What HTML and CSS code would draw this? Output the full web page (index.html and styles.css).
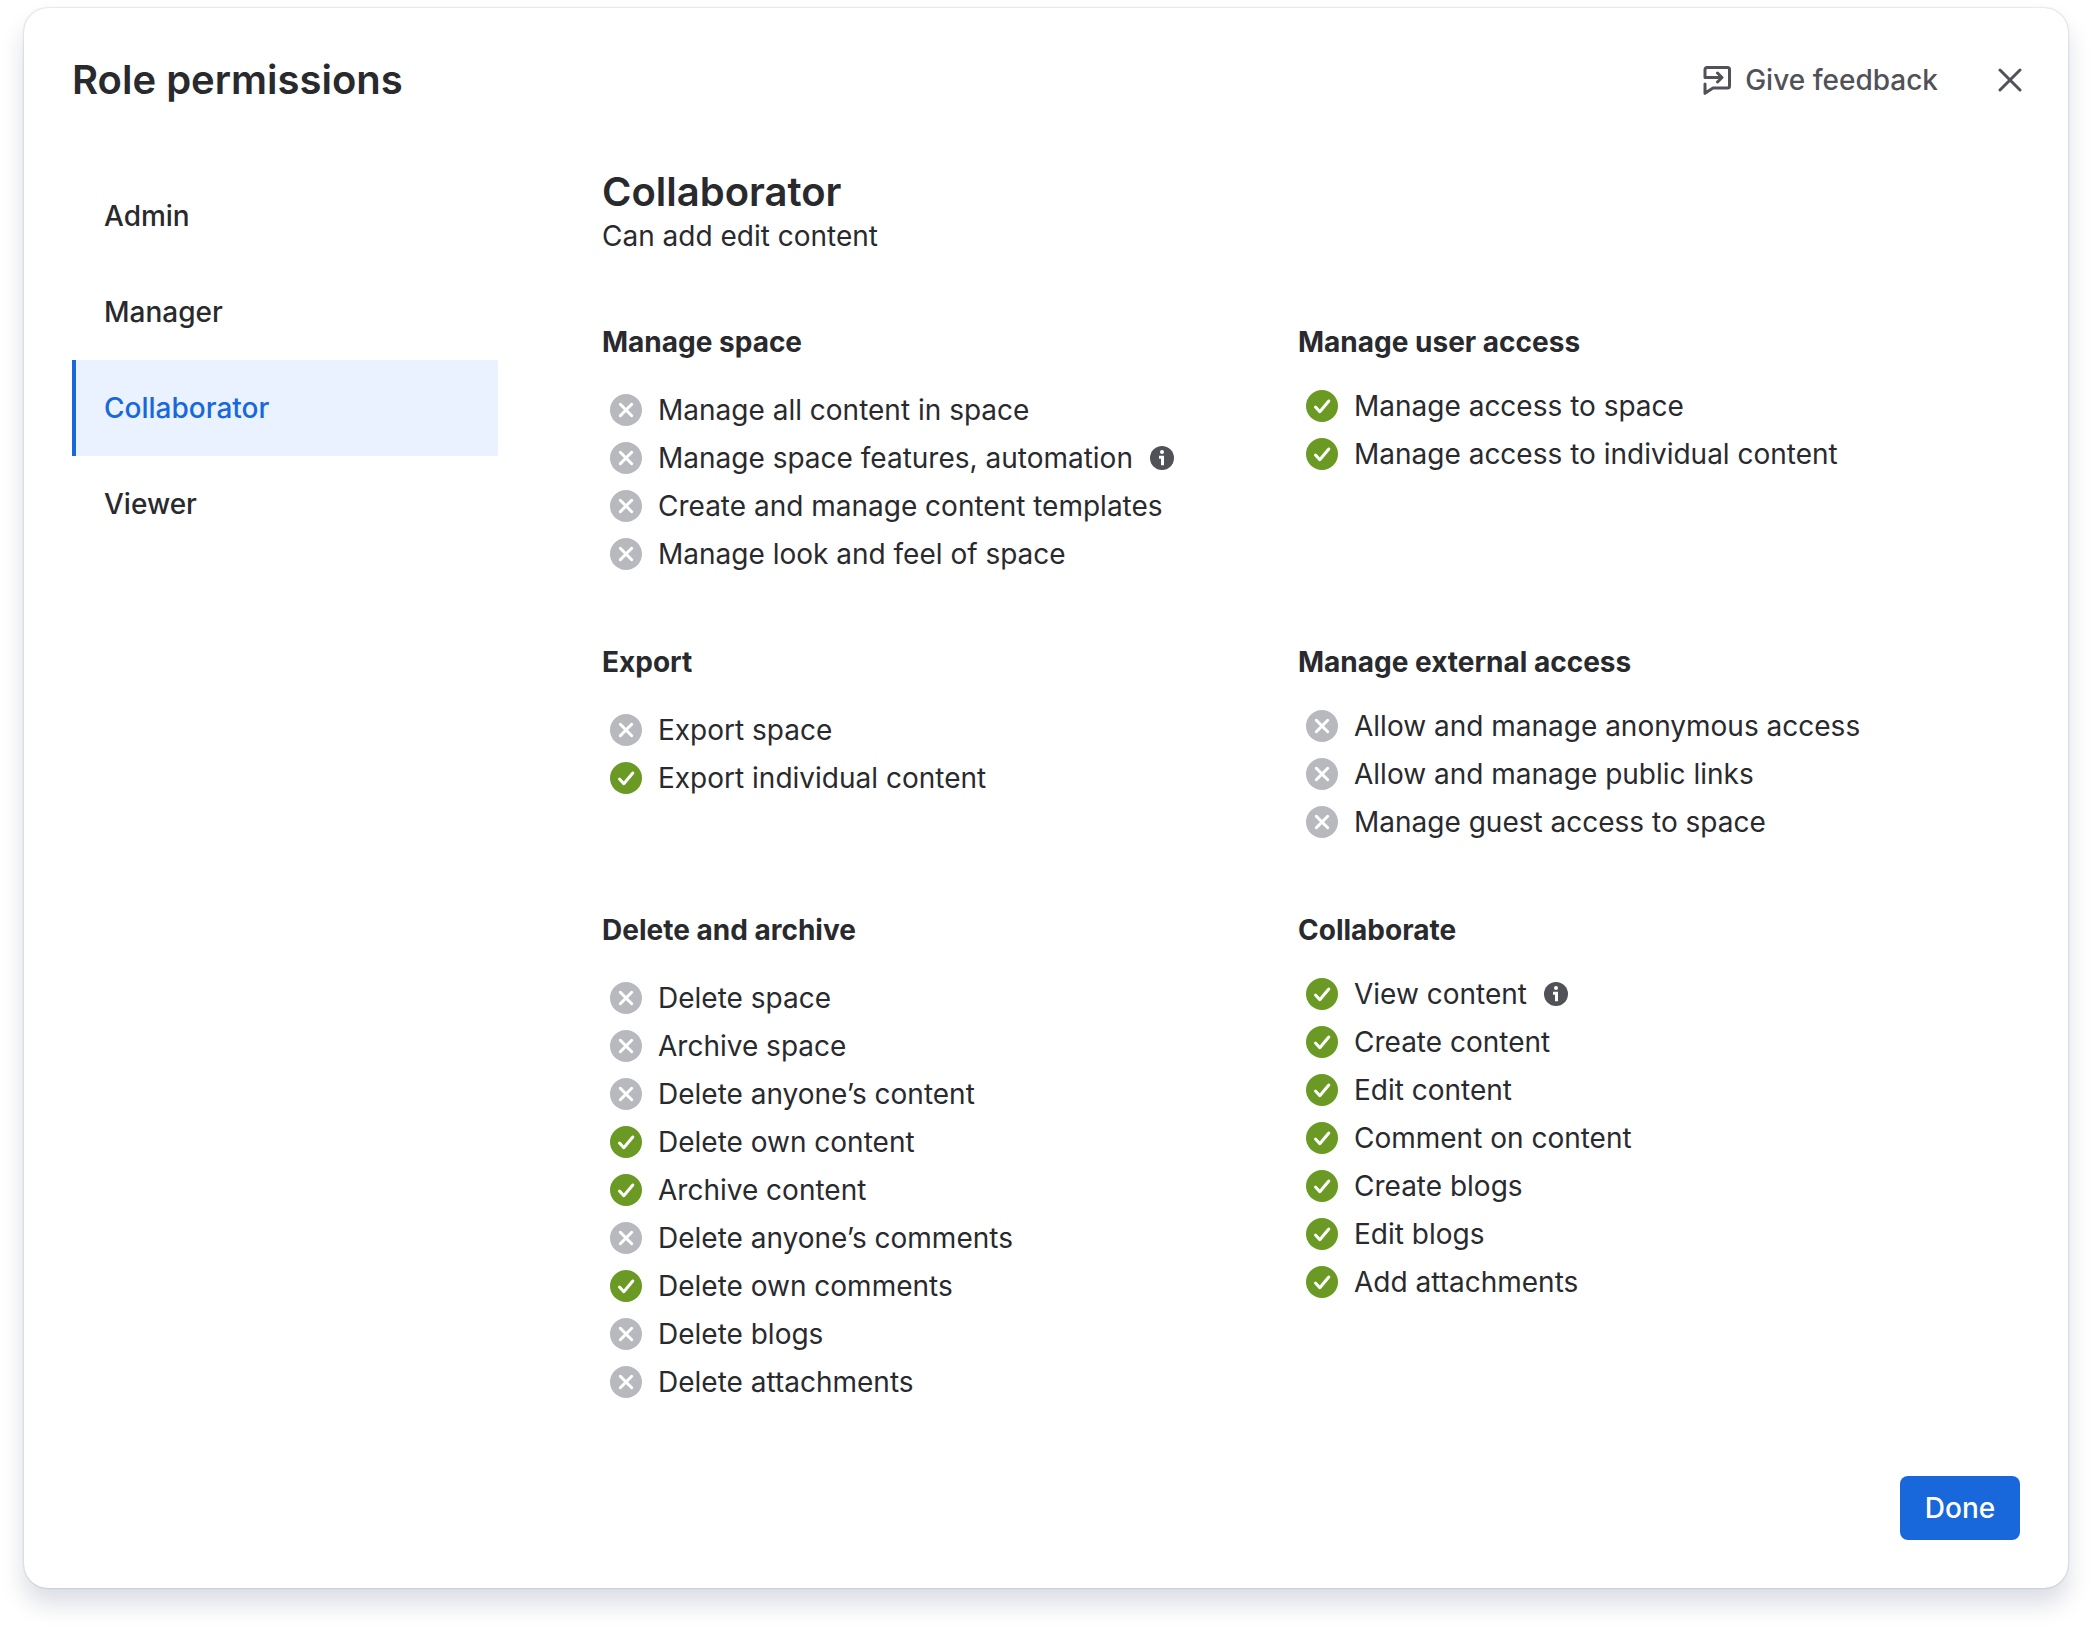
FILE: index.html
```html
<!DOCTYPE html>
<html lang="en">
<head>
    <meta charset="UTF-8">
    <meta name="viewport" content="width=device-width, initial-scale=1.0">
    <title>Role permissions</title>
    <link rel="stylesheet" href="styles.css">
</head>
<body>
    <!-- Shared icons -->
    <svg class="sprite" aria-hidden="true">
        <symbol id="icon-no" viewBox="0 0 32 32">
            <circle cx="16" cy="16" r="16" fill="#b7b9be"/>
            <path d="M10.300 10.300l11.400 11.400M21.700 10.300l-11.400 11.400" fill="none" stroke="#fff" stroke-width="3" stroke-linecap="round"/>
        </symbol>
        <symbol id="icon-yes" viewBox="0 0 32 32">
            <circle cx="16" cy="16" r="16" fill="#6a9a23"/>
            <path d="M9.500 17l4.300 4.700 9-10.700" fill="none" stroke="#fff" stroke-width="3" stroke-linecap="round" stroke-linejoin="round"/>
        </symbol>
        <symbol id="icon-info" viewBox="0 0 24 24">
            <circle cx="12" cy="12" r="12" fill="#505258"/>
            <circle cx="12" cy="6" r="2" fill="#fff"/>
            <path d="M9 11.200h3.500v8" fill="none" stroke="#fff" stroke-width="3"/>
        </symbol>
    </svg>

    <main class="modal" role="dialog" aria-labelledby="modal-title">
        <header class="modal-header">
            <h1 id="modal-title">Role permissions</h1>
            <div class="header-actions">
                <button type="button" class="feedback">
                    <svg width="28" height="30" viewBox="0 0 28 30" fill="none" stroke="currentColor" stroke-width="3" stroke-linecap="round" stroke-linejoin="round" aria-hidden="true">
                        <path d="M2 12.500V4.500a2 2 0 0 1 2-2h20.500a2 2 0 0 1 2 2V21a2 2 0 0 1-2 2H10L2 28.300V19M2 12.500H18M14.500 8l4.500 4.500-4.500 4.500"/>
                    </svg>
                    Give feedback
                </button>
                <button type="button" class="close" aria-label="Close">
                    <svg width="24" height="24" viewBox="0 0 24 24" fill="none" stroke="currentColor" stroke-width="3" stroke-linecap="round" aria-hidden="true">
                        <path d="M2 2l20 20M22 2L2 22"/>
                    </svg>
                </button>
            </div>
        </header>

        <div class="modal-body">
            <nav class="roles" aria-label="Roles">
                <a href="#admin">Admin</a>
                <a href="#manager">Manager</a>
                <a href="#collaborator" class="selected" aria-current="page">Collaborator</a>
                <a href="#viewer">Viewer</a>
            </nav>

            <div class="role">
                <h2>Collaborator</h2>
                <p>Can add edit content</p>

                <div class="groups">
                    <section class="group">
                        <h3>Manage space</h3>
                        <ul>
                            <li><svg class="status"><use href="#icon-no"/></svg>Manage all content in space</li>
                            <li><svg class="status"><use href="#icon-no"/></svg>Manage space features, automation <svg class="info"><use href="#icon-info"/></svg></li>
                            <li><svg class="status"><use href="#icon-no"/></svg>Create and manage content templates</li>
                            <li><svg class="status"><use href="#icon-no"/></svg>Manage look and feel of space</li>
                        </ul>
                    </section>

                    <section class="group">
                        <h3>Manage user access</h3>
                        <ul>
                            <li><svg class="status"><use href="#icon-yes"/></svg>Manage access to space</li>
                            <li><svg class="status"><use href="#icon-yes"/></svg>Manage access to individual content</li>
                        </ul>
                    </section>

                    <section class="group">
                        <h3>Export</h3>
                        <ul>
                            <li><svg class="status"><use href="#icon-no"/></svg>Export space</li>
                            <li><svg class="status"><use href="#icon-yes"/></svg>Export individual content</li>
                        </ul>
                    </section>

                    <section class="group">
                        <h3>Manage external access</h3>
                        <ul>
                            <li><svg class="status"><use href="#icon-no"/></svg>Allow and manage anonymous access</li>
                            <li><svg class="status"><use href="#icon-no"/></svg>Allow and manage public links</li>
                            <li><svg class="status"><use href="#icon-no"/></svg>Manage guest access to space</li>
                        </ul>
                    </section>

                    <section class="group">
                        <h3>Delete and archive</h3>
                        <ul>
                            <li><svg class="status"><use href="#icon-no"/></svg>Delete space</li>
                            <li><svg class="status"><use href="#icon-no"/></svg>Archive space</li>
                            <li><svg class="status"><use href="#icon-no"/></svg>Delete anyone’s content</li>
                            <li><svg class="status"><use href="#icon-yes"/></svg>Delete own content</li>
                            <li><svg class="status"><use href="#icon-yes"/></svg>Archive content</li>
                            <li><svg class="status"><use href="#icon-no"/></svg>Delete anyone’s comments</li>
                            <li><svg class="status"><use href="#icon-yes"/></svg>Delete own comments</li>
                            <li><svg class="status"><use href="#icon-no"/></svg>Delete blogs</li>
                            <li><svg class="status"><use href="#icon-no"/></svg>Delete attachments</li>
                        </ul>
                    </section>

                    <section class="group">
                        <h3>Collaborate</h3>
                        <ul>
                            <li><svg class="status"><use href="#icon-yes"/></svg>View content <svg class="info"><use href="#icon-info"/></svg></li>
                            <li><svg class="status"><use href="#icon-yes"/></svg>Create content</li>
                            <li><svg class="status"><use href="#icon-yes"/></svg>Edit content</li>
                            <li><svg class="status"><use href="#icon-yes"/></svg>Comment on content</li>
                            <li><svg class="status"><use href="#icon-yes"/></svg>Create blogs</li>
                            <li><svg class="status"><use href="#icon-yes"/></svg>Edit blogs</li>
                            <li><svg class="status"><use href="#icon-yes"/></svg>Add attachments</li>
                        </ul>
                    </section>
                </div>
            </div>
        </div>

        <footer class="modal-footer">
            <button type="button" class="done">Done</button>
        </footer>
    </main>
</body>
</html>
```
FILE: styles.css
```css
* {
    box-sizing: border-box;
}
body {
    margin: 0;
    padding: 8px 24px 40px;
    background: #fff;
    color: #292a2e;
    font-family: Inter, sans-serif;
    font-size: 28px;
    line-height: 40px;
}
h1, h2, h3, p, ul {
    margin: 0;
    padding: 0;
}
h1, h2 {
    font-size: 40px;
    line-height: 48px;
    font-weight: 600;
}
h3 {
    font-size: 28px;
    line-height: 40px;
    font-weight: 650;
}
ul {
    list-style: none;
}
button {
    font: inherit;
    border: none;
    cursor: pointer;
}
.sprite {
    display: none;
}
.modal {
    padding: 48px;
    background: #fff;
    border-radius: 24px;
    box-shadow: 0 16px 24px rgba(9, 30, 66, 0.15), 0 0 2px rgba(9, 30, 66, 0.31);
}

/* Header */
.modal-header {
    display: flex;
    justify-content: space-between;
    align-items: center;
    margin-bottom: 64px;
}
.header-actions {
    display: flex;
    align-items: center;
    gap: 60px;
    margin-right: -2px;
}
.feedback, .close {
    display: flex;
    align-items: center;
    padding: 0;
    background: none;
    color: #505258;
}
.feedback {
    gap: 14px;
    font-weight: 500;
}

/* Role list on the left */
.modal-body {
    display: flex;
    gap: 104px;
}
.roles {
    flex: 0 0 426px;
}
.roles a {
    display: block;
    padding: 28px;
    border-left: 4px solid transparent;
    color: #292a2e;
    font-weight: 500;
    text-decoration: none;
}
.roles .selected {
    border-left-color: #1868db;
    background: #e9f2fe;
    color: #1868db;
}

/* Permissions of the selected role */
.role {
    flex: 1;
    padding-right: 26px;
}
.groups {
    display: grid;
    grid-template-columns: 1fr 1fr;
    row-gap: 64px;
    margin-top: 66px;
}
.group ul {
    padding-left: 8px;
    margin-top: 24px;
}
.group:nth-child(even) ul {
    margin-top: 20px;
}
.group li {
    display: flex;
    align-items: center;
    height: 48px;
}
.status {
    width: 32px;
    height: 32px;
    margin-right: 16px;
}
.info {
    width: 24px;
    height: 24px;
    margin-left: 17px;
}

/* Footer */
.modal-footer {
    display: flex;
    justify-content: flex-end;
    margin-top: 70px;
}
.done {
    min-width: 120px;
    padding: 12px 24px;
    border-radius: 8px;
    background: #1868db;
    color: #fff;
    font-weight: 500;
}
```
